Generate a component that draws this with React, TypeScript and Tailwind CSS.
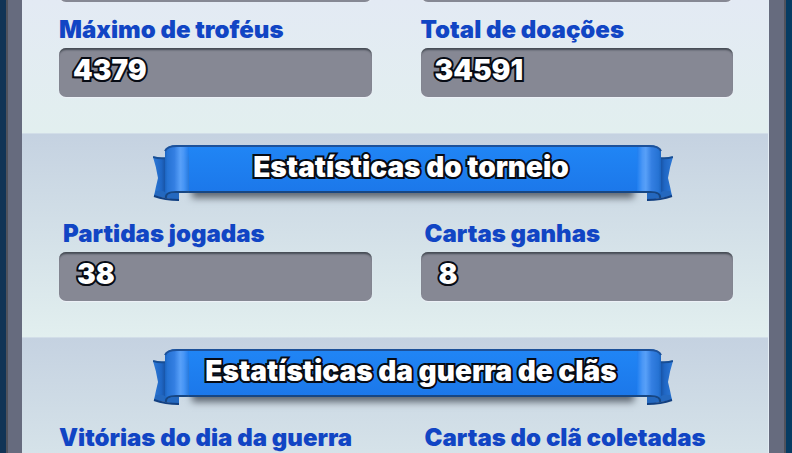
import type { ReactNode } from "react";

const labelText = "text-[#1145c4] font-black text-[24px] leading-[28px] whitespace-nowrap";
const outlined =
  "text-white font-black [paint-order:stroke_fill] [-webkit-text-stroke:4px_#070b14] [text-shadow:0_2px_0_#070b14]";
const fieldBox =
  "h-[49px] rounded-[7px] bg-[#868894] shadow-[inset_0_3px_2px_-1px_#454b54,0_1px_1px_#eef1f8]";

type StatProps = { label: string; value?: string; inset?: boolean };

function Stat({ label, value, inset }: StatProps) {
  return (
    <div className="flex-1 min-w-0">
      <dt className={`${labelText} ${inset ? "pl-1" : ""}`}>{label}</dt>
      <dd className={`${fieldBox} mt-1 flex items-start ${inset ? "pl-[18px]" : "pl-[14px]"}`}>
        <span className={`${outlined} text-[28px] leading-[44px]`}>{value}</span>
      </dd>
    </div>
  );
}

function Stats({ children }: { children: ReactNode }) {
  return <dl className="flex gap-[49px] pl-[37px] pr-[35px]">{children}</dl>;
}

function RibbonEnd({ side }: { side: "left" | "right" }) {
  const roll = `roll-${side}`;
  const tail = `tail-${side}`;
  return (
    <svg
      viewBox="0 0 36 60"
      aria-hidden="true"
      className={`w-9 h-[60px] shrink-0 ${side === "right" ? "-scale-x-100" : ""}`}
    >
      <defs>
        <linearGradient id={roll} x1="0" x2="1" y1="0" y2="0">
          <stop offset="0" stopColor="#1a63bf" />
          <stop offset="0.12" stopColor="#2673d4" />
          <stop offset="0.4" stopColor="#347fe2" />
          <stop offset="0.64" stopColor="#58a0f8" />
          <stop offset="0.78" stopColor="#4a97f6" />
          <stop offset="1" stopColor="#1e7ef0" />
        </linearGradient>
        <linearGradient id={tail} x1="0" x2="1" y1="0" y2="0">
          <stop offset="0" stopColor="#2d78d6" />
          <stop offset="0.6" stopColor="#1f66c4" />
          <stop offset="1" stopColor="#154b97" />
        </linearGradient>
      </defs>
      <path d="M0 13 Q6 15 14 14 V54 L1 52 Q3 42 5 34 Q3 22 0 13Z" fill={`url(#${tail})`} />
      <path d="M0 13 Q6 15 14 14" fill="none" stroke="#174e94" strokeWidth="2" />
      <path d="M1 52 Q11 53 26 57 V48 H12 Q9 46 3 47Z" fill="#2468bf" />
      <path d="M1 52 Q12 56 26 56" fill="none" stroke="#123f80" strokeWidth="2" />
      <path
        d="M12 7 Q14 1 24 1 H36 V49 H23 Q12 49 13 55 Q11 53 12 46Z"
        fill={`url(#${roll})`}
      />
      <path d="M12 7 Q14 2 24 2 H36" fill="none" stroke="#1d5199" strokeWidth="2" />
      <path d="M13 54 Q12 48 23 48 H36" fill="none" stroke="#174682" strokeWidth="2" />
    </svg>
  );
}

function Ribbon({ children }: { children: ReactNode }) {
  return (
    <div className="flex items-start ml-[131px] mr-[95px] pt-[10px] h-[86px]">
      <RibbonEnd side="left" />
      <h2
        className={`${outlined} flex-1 min-w-0 mt-px h-12 flex justify-center border-t-2 border-[#1d5199] border-b-2 border-b-[#174682] bg-linear-to-b from-[#2085f5] to-[#1c78ea] pr-1 text-[28px] leading-[40px] whitespace-nowrap shadow-[0_8px_7px_-3px_#5f6872]`}
      >
        {children}
      </h2>
      <RibbonEnd side="right" />
    </div>
  );
}

function Section({ title, children }: { title: string; children: ReactNode }) {
  return (
    <section className="h-[204px] border-t border-[#d2dee8] bg-linear-to-b from-[#c5d2e1] to-[#e2efef]">
      <Ribbon>{title}</Ribbon>
      <Stats>{children}</Stats>
    </section>
  );
}

export default function App() {
  return (
    <div className="h-screen overflow-hidden bg-linear-to-r from-[#113456] to-[#063c63] px-[6px] font-[Inter,'Liberation_Sans',sans-serif]">
      <div className="h-full bg-[#666b7e] border-x-2 border-[#50525c] pl-[14px] pr-[15px]">
        <main className="h-full overflow-hidden border-r border-[#e3edf5]">
          <section className="h-[133px] bg-linear-to-b from-[#e3eaf4] to-[#e2efef]">
            <div className="h-4">
              <div className="h-[2px] overflow-hidden flex items-end gap-[49px] pl-[37px] pr-[35px]">
                <div className={`${fieldBox} flex-1 shrink-0`} />
                <div className={`${fieldBox} flex-1 shrink-0`} />
              </div>
            </div>
            <Stats>
              <Stat label="Máximo de troféus" value="4379" />
              <Stat label="Total de doações" value="34591" />
            </Stats>
          </section>
          <Section title="Estatísticas do torneio">
            <Stat label="Partidas jogadas" value="38" inset />
            <Stat label="Cartas ganhas" value="8" inset />
          </Section>
          <Section title="Estatísticas da guerra de clãs">
            <Stat label="Vitórias do dia da guerra" />
            <Stat label="Cartas do clã coletadas" inset />
          </Section>
        </main>
      </div>
    </div>
  );
}
